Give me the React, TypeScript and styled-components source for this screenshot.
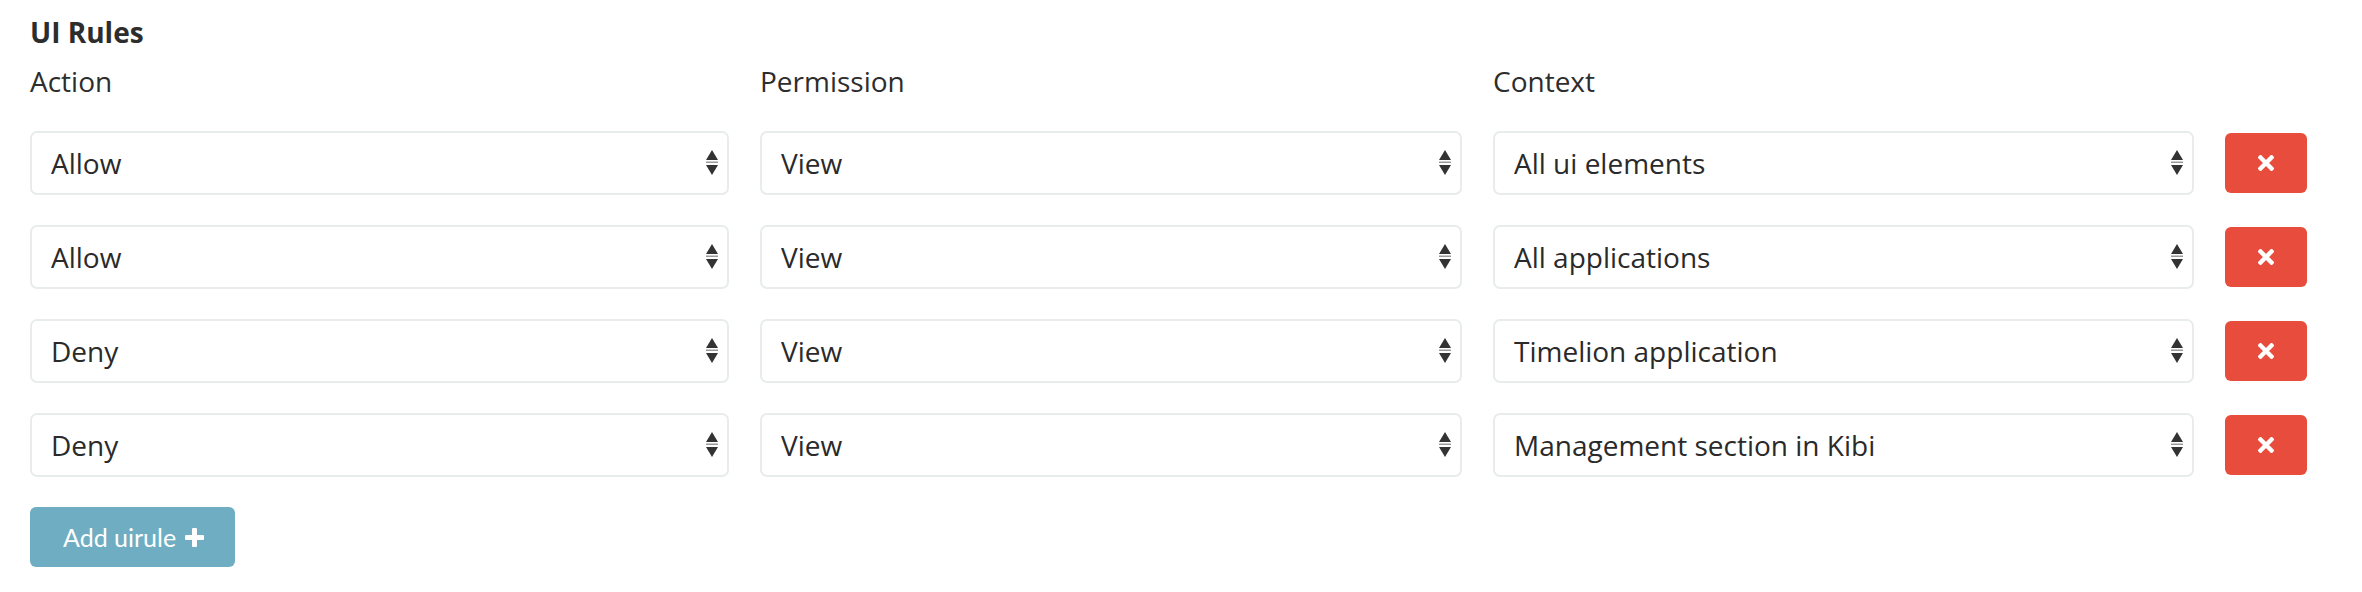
import React from "react";
import styled, { createGlobalStyle } from "styled-components";

const GlobalStyle = createGlobalStyle`
  html, body {
    margin: 0;
    padding: 0;
    background: #ffffff;
  }
  body {
    font-family: "Open Sans", "Liberation Sans", sans-serif;
    color: #2d2d2d;
  }
`;

const Page = styled.div`
  padding: 14px 30px 24px 30px;
  width: 2362px;
  box-sizing: border-box;
`;

const Title = styled.h3`
  margin: 0;
  font-family: "Open Sans", sans-serif;
  font-weight: 700;
  font-size: 28px;
  line-height: 36px;
  color: #2d2d2d;
`;

const RulesGrid = styled.div`
  display: grid;
  grid-template-columns: 699px 702px 701px 82px;
  column-gap: 31px;
  row-gap: 30px;
  margin-top: 13px;
  align-items: center;
`;

const ColumnLabel = styled.label`
  font-family: "Open Sans", sans-serif;
  font-size: 28px;
  line-height: 36px;
  color: #2d2d2d;
  margin-bottom: 2px;
  align-self: start;
`;

const SelectWrap = styled.div`
  position: relative;
  height: 64px;
`;

const Select = styled.select`
  appearance: none;
  -webkit-appearance: none;
  width: 100%;
  height: 64px;
  box-sizing: border-box;
  border: 2px solid #e8eced;
  border-radius: 7px;
  background: #ffffff;
  padding: 0 40px 0 19px;
  font-family: "Open Sans", sans-serif;
  font-size: 28px;
  color: #2a2a2a;
  outline: none;
`;

const Arrows = styled.svg`
  position: absolute;
  right: 11px;
  top: 50%;
  transform: translateY(-50%);
  pointer-events: none;
`;

const DeleteButton = styled.button`
  width: 82px;
  height: 60px;
  border: none;
  border-radius: 6px;
  background: #e74c3c;
  display: flex;
  align-items: center;
  justify-content: center;
  padding: 0;
  cursor: pointer;
`;

const AddButton = styled.button`
  margin-top: 30px;
  height: 60px;
  border: none;
  border-radius: 6px;
  background: #6eadc2;
  color: #ffffff;
  font-family: "Lato", sans-serif;
  font-size: 25px;
  padding: 0 31px 0 33px;
  display: inline-flex;
  align-items: center;
  gap: 9px;
  cursor: pointer;
`;

const SelectArrows = () => (
  <Arrows width="12" height="26" viewBox="0 0 12 26">
    <polygon points="6,0 12,10 0,10" fill="#333333" />
    <rect x="0" y="11.5" width="12" height="1.5" fill="#9a9a9a" />
    <polygon points="0,15 12,15 6,25" fill="#333333" />
  </Arrows>
);

const TimesIcon = () => (
  <svg width="16" height="16" viewBox="0 0 16 16">
    <path d="M2.5 2.5 L13.5 13.5 M13.5 2.5 L2.5 13.5" stroke="#ffffff" strokeWidth="4.4" strokeLinecap="square" />
  </svg>
);

const PlusIcon = () => (
  <svg width="19" height="19" viewBox="0 0 19 19">
    <rect x="7" y="0" width="5" height="19" rx="1" fill="#ffffff" />
    <rect x="0" y="7" width="19" height="5" rx="1" fill="#ffffff" />
  </svg>
);

type Rule = { action: string; permission: string; context: string };

const rules: Rule[] = [
  { action: "Allow", permission: "View", context: "All ui elements" },
  { action: "Allow", permission: "View", context: "All applications" },
  { action: "Deny", permission: "View", context: "Timelion application" },
  { action: "Deny", permission: "View", context: "Management section in Kibi" },
];

const actionOptions = ["Allow", "Deny"];
const permissionOptions = ["View"];
const contextOptions = [
  "All ui elements",
  "All applications",
  "Timelion application",
  "Management section in Kibi",
];

const Field = ({ value, options }: { value: string; options: string[] }) => (
  <SelectWrap>
    <Select defaultValue={value}>
      {options.map((o) => (
        <option key={o} value={o}>
          {o}
        </option>
      ))}
    </Select>
    <SelectArrows />
  </SelectWrap>
);

export default function App() {
  return (
    <>
      <GlobalStyle />
      <Page>
        <Title>UI Rules</Title>
        <RulesGrid>
          <ColumnLabel>Action</ColumnLabel>
          <ColumnLabel>Permission</ColumnLabel>
          <ColumnLabel>Context</ColumnLabel>
          <div />
          {rules.map((r, i) => (
            <React.Fragment key={i}>
              <Field value={r.action} options={actionOptions} />
              <Field value={r.permission} options={permissionOptions} />
              <Field value={r.context} options={contextOptions} />
              <DeleteButton aria-label="Remove rule">
                <TimesIcon />
              </DeleteButton>
            </React.Fragment>
          ))}
        </RulesGrid>
        <AddButton>
          Add uirule
          <PlusIcon />
        </AddButton>
      </Page>
    </>
  );
}
